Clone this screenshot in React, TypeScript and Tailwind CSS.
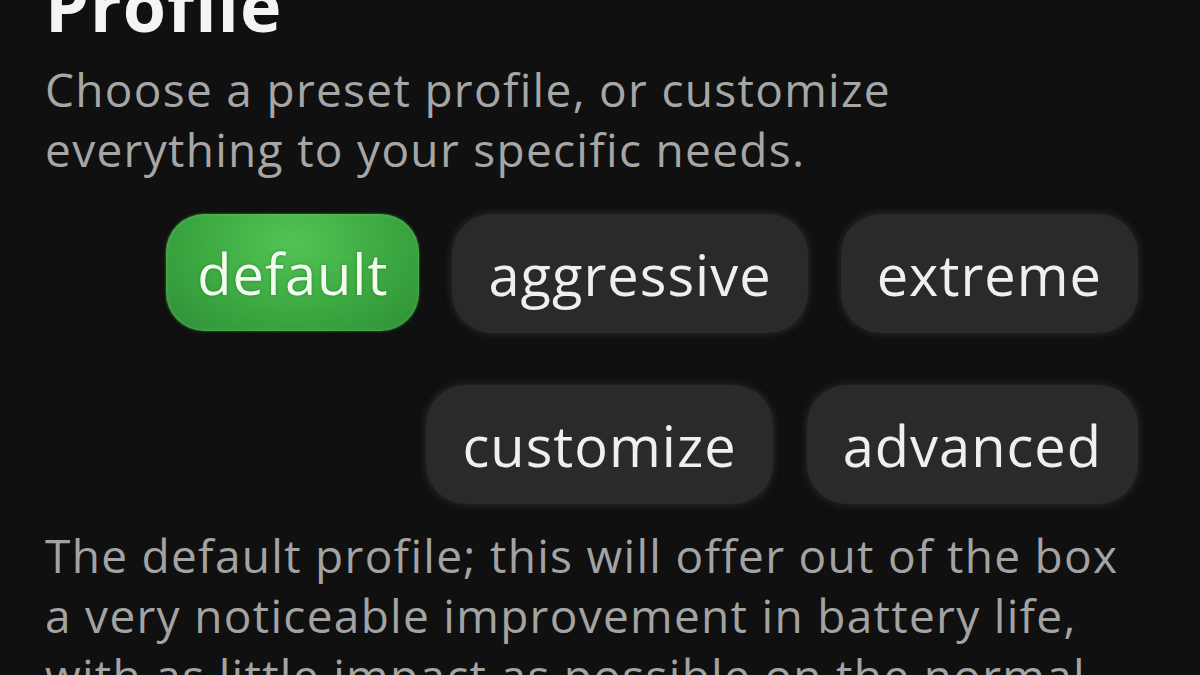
const font = { fontFamily: '"Open Sans", "Noto Sans", sans-serif' };

const row1 = [
  { label: 'default', active: true },
  { label: 'aggressive' },
  { label: 'extreme' },
];
const row2 = [{ label: 'customize' }, { label: 'advanced' }];

export default function App() {
  return (
    <div
      style={font}
      className="h-[675px] w-[1200px] overflow-hidden bg-[#101010] pl-[45px] pr-[62px]"
    >
      <h1 className="-mt-[30px] text-[70px] leading-[70px] font-bold tracking-[1px] text-[#f4f4f4]">
        Profile
      </h1>
      <p className="mt-[19px] text-[46px] leading-[60px] tracking-[1.3px] text-[#a6a6a6]">
        Choose a preset profile, or customize everything to your specific needs.
      </p>

      <div className="mt-[35px] flex justify-end gap-[33px]">
        {row1.map((b) => (
          <ProfileButton key={b.label} label={b.label} active={b.active} />
        ))}
      </div>
      <div className="mt-[52px] flex justify-end gap-[34px]">
        {row2.map((b) => (
          <ProfileButton key={b.label} label={b.label} />
        ))}
      </div>

      <p className="mt-[21px] text-[46px] leading-[60px] tracking-[1.3px] text-[#a3a3a3]">
        The default profile; this will offer out of the box a very noticeable improvement in
        battery life, with as little impact as possible on the normal usage of your phone.
      </p>
    </div>
  );
}

function ProfileButton({ label, active }: { label: string; active?: boolean }) {
  if (active) {
    return (
      <div className="flex h-[117px] items-center rounded-[38px] bg-[radial-gradient(ellipse_at_50%_25%,#52c455_0%,#3ca841_55%,#2f8f36_100%)] px-[31px] text-[56px] tracking-[1px] text-[#f1fbef] shadow-[0_0_2px_1px_#1d4a20,inset_0_0_3px_1px_rgba(120,210,120,0.35)] [text-shadow:0_0_3px_rgba(40,120,40,0.8)]">
        {label}
      </div>
    );
  }
  return (
    <div className="flex h-[119px] items-center rounded-[40px] bg-[#2a2a2a] px-[36px] text-[56px] tracking-[1px] text-[#efefef] shadow-[0_0_6px_2px_#242424]">
      {label}
    </div>
  );
}
